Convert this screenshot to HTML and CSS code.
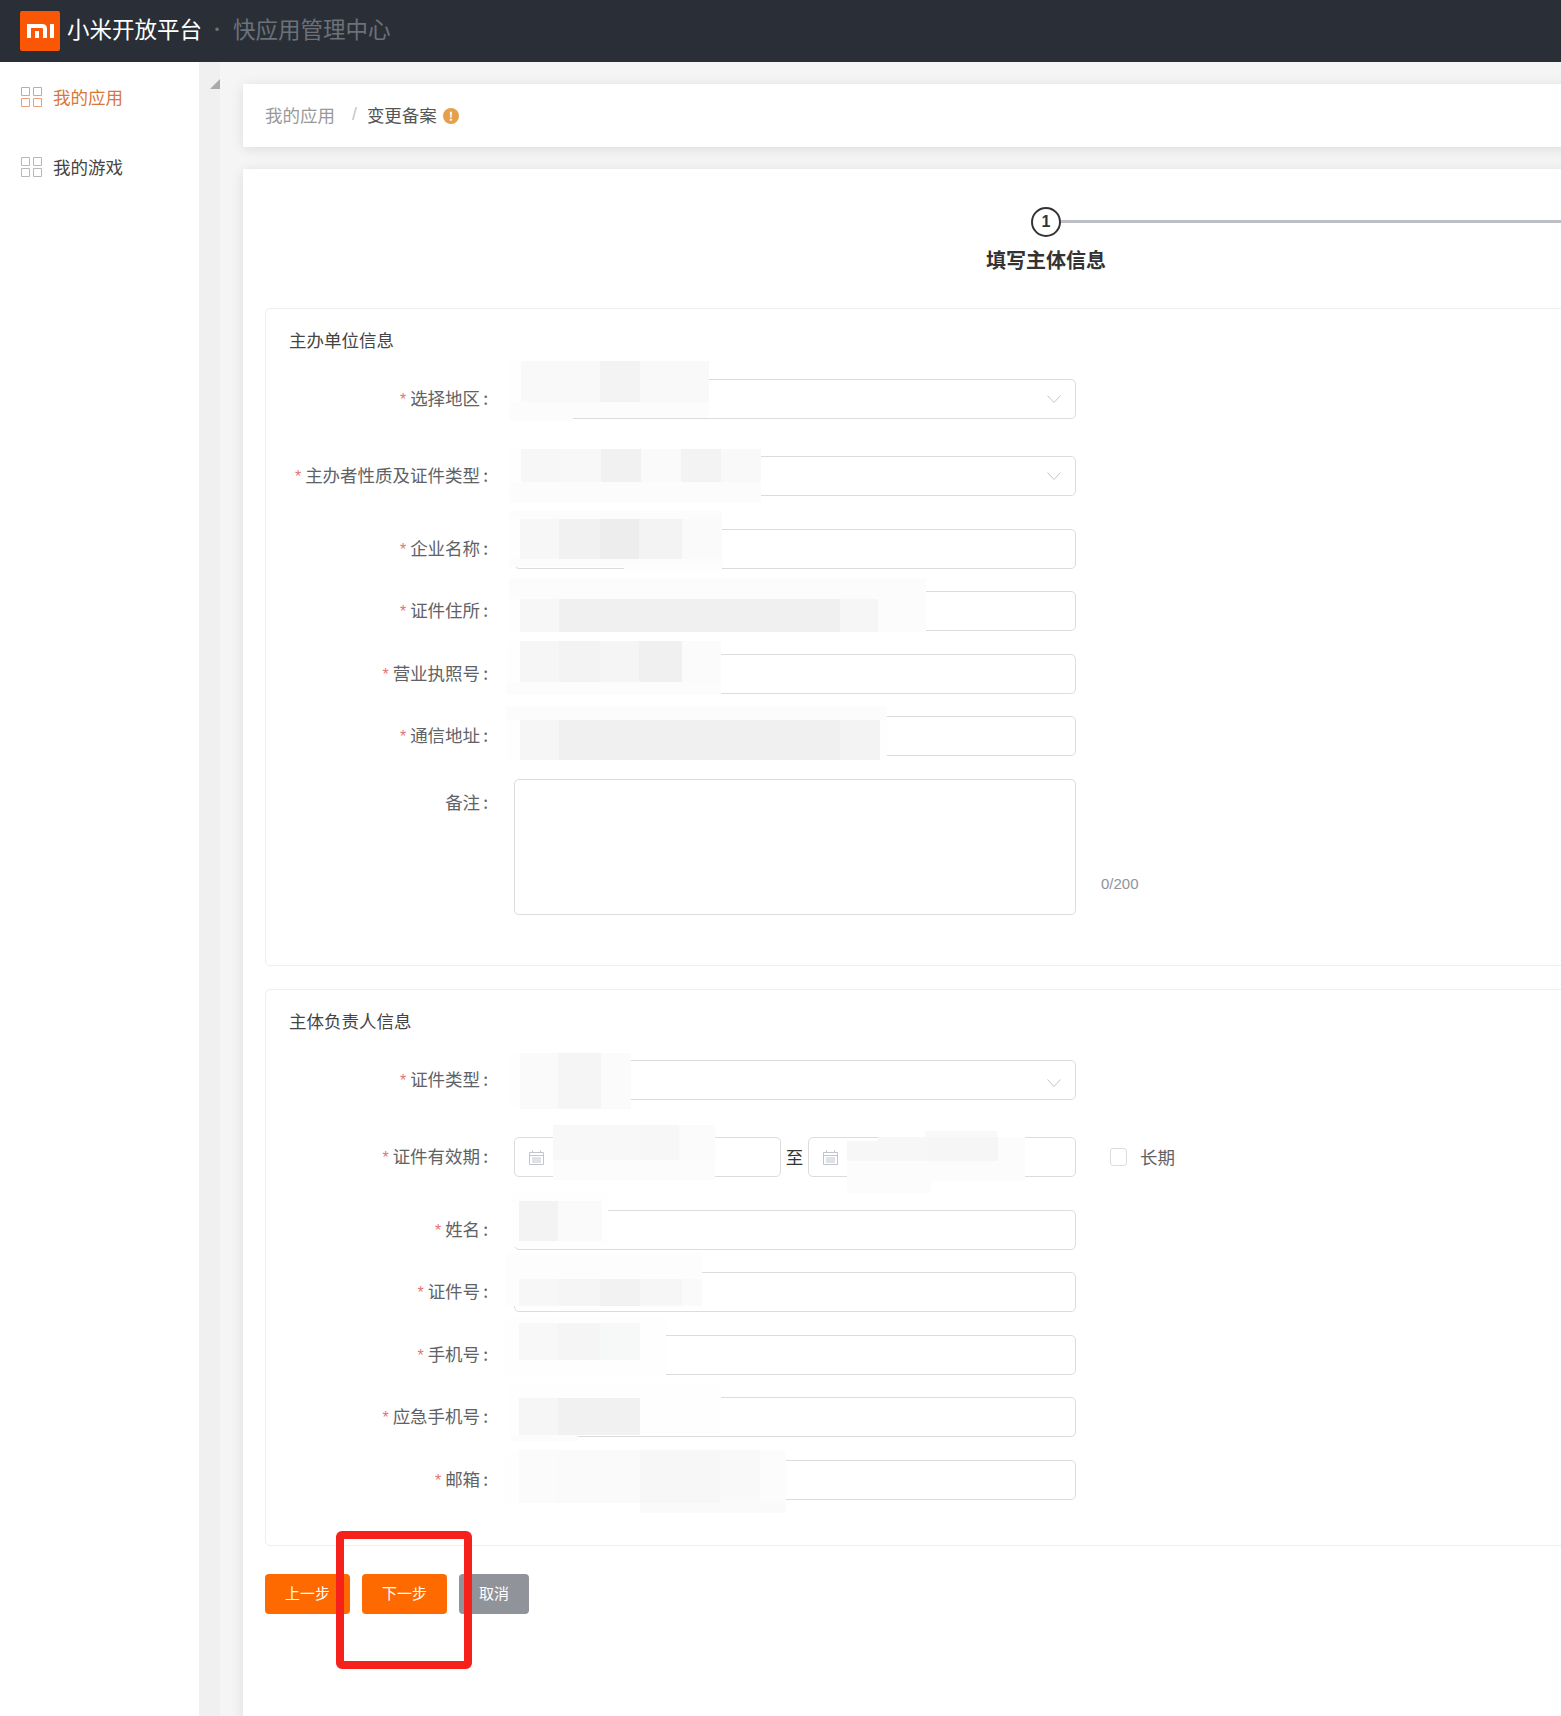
FILE: index.html
```html
<!DOCTYPE html>
<html lang="zh-CN">

<head>
  <meta charset="UTF-8">
  <meta name="viewport" content="width=device-width, initial-scale=1.0">
  <title>小米开放平台 · 快应用管理中心</title>
  <link rel="stylesheet" href="styles.css">
</head>

<body>
  <header class="topbar">
    <svg class="logo" viewBox="0 0 40 40">
      <rect width="40" height="40" rx="2" fill="#f95706" />
      <path fill="#fff" d="M7 13H22Q27 13 27 18V27H23V18Q23 17 22 17H11V27H7ZM15 20H19V27H15ZM30 13H34V27H30Z" />
    </svg>
    <span class="brand">小米开放平台</span>
    <span class="brand-dot">·</span>
    <span class="brand-sub">快应用管理中心</span>
  </header>

  <div class="app">
    <nav class="sidebar">
      <a class="nav-item nav-active">
        <svg class="nav-icon" viewBox="0 0 21 20">
          <path d="M.5.5h8v8h-8zM12.5.5h8v8h-8zM.5 11.5h8v8h-8zM12.5 11.5h8v8h-8z" />
        </svg>
        我的应用
      </a>
      <a class="nav-item">
        <svg class="nav-icon" viewBox="0 0 21 20">
          <path d="M.5.5h8v8h-8zM12.5.5h8v8h-8zM.5 11.5h8v8h-8zM12.5 11.5h8v8h-8z" />
        </svg>
        我的游戏
      </a>
    </nav>

    <div class="collapse-strip"><span class="collapse-mark"></span></div>

    <main class="content">
      <div class="crumbs">
        <span class="crumb-link">我的应用</span>
        <span class="crumb-sep">/</span>
        <span class="crumb-now">变更备案</span>
        <span class="crumb-warn">!</span>
      </div>

      <section class="card">
        <div class="stepper">
          <div class="step-track">
            <span class="step-num">1</span>
            <span class="step-line"></span>
          </div>
          <div class="step-title">填写主体信息</div>
        </div>

        <div class="panel panel-org">
          <h3 class="panel-title">主办单位信息</h3>

          <div class="row gap-l">
            <label class="label req">选择地区<span class="colon">:</span></label>
            <div class="field select">
              <svg class="chevron" viewBox="0 0 14 8"><path d="M.5.5 7 7.5 13.5.5" /></svg>
              <div class="patch p1"></div>
              <div class="patch p1b"></div>
            </div>
          </div>
          <div class="row gap-m">
            <label class="label req">主办者性质及证件类型<span class="colon">:</span></label>
            <div class="field select">
              <svg class="chevron" viewBox="0 0 14 8"><path d="M.5.5 7 7.5 13.5.5" /></svg>
              <div class="patch p2"></div>
            </div>
          </div>
          <div class="row">
            <label class="label req">企业名称<span class="colon">:</span></label>
            <div class="field">
              <input class="input" type="text">
              <div class="patch p3"></div>
              <div class="patch p3b"></div>
            </div>
          </div>
          <div class="row gap-t">
            <label class="label req">证件住所<span class="colon">:</span></label>
            <div class="field">
              <input class="input" type="text">
              <div class="patch p4"></div>
            </div>
          </div>
          <div class="row">
            <label class="label req">营业执照号<span class="colon">:</span></label>
            <div class="field">
              <input class="input" type="text">
              <div class="patch p5"></div>
            </div>
          </div>
          <div class="row gap-t">
            <label class="label req">通信地址<span class="colon">:</span></label>
            <div class="field">
              <input class="input" type="text">
              <div class="patch p6"></div>
            </div>
          </div>
          <div class="row row-area">
            <label class="label label-top">备注<span class="colon">:</span></label>
            <div class="field"><textarea class="input area"></textarea></div>
            <span class="counter">0/200</span>
          </div>
        </div>

        <div class="panel panel-owner">
          <h3 class="panel-title">主体负责人信息</h3>

          <div class="row gap-l">
            <label class="label req">证件类型<span class="colon">:</span></label>
            <div class="field select">
              <svg class="chevron chevron-low" viewBox="0 0 14 8"><path d="M.5.5 7 7.5 13.5.5" /></svg>
              <div class="patch p7"></div>
            </div>
          </div>
          <div class="row gap-m">
            <label class="label req">证件有效期<span class="colon">:</span></label>
            <div class="field date-range">
              <div class="date">
                <svg class="cal" viewBox="0 0 15 15">
                  <path d="M.5 2.5h14v12H.5zM.5 5.5h14M3.5.5v2M11.5.5v2M3 8h9M3 10h9M3 12h9" />
                </svg>
              </div>
              <span class="date-to">至</span>
              <div class="date">
                <svg class="cal" viewBox="0 0 15 15">
                  <path d="M.5 2.5h14v12H.5zM.5 5.5h14M3.5.5v2M11.5.5v2M3 8h9M3 10h9M3 12h9" />
                </svg>
              </div>
              <div class="patch p8"></div>
              <div class="patch p9"></div>
              <div class="patch p9b"></div>
              <div class="patch p9c"></div>
              <div class="patch p9d"></div>
            </div>
            <div class="long-term">
              <span class="checkbox"></span>
              <span class="long-text">长期</span>
            </div>
          </div>
          <div class="row">
            <label class="label req">姓名<span class="colon">:</span></label>
            <div class="field">
              <input class="input" type="text">
              <div class="patch p10"></div>
            </div>
          </div>
          <div class="row gap-t">
            <label class="label req">证件号<span class="colon">:</span></label>
            <div class="field">
              <input class="input" type="text">
              <div class="patch p11"></div>
            </div>
          </div>
          <div class="row">
            <label class="label req">手机号<span class="colon">:</span></label>
            <div class="field">
              <input class="input" type="text">
              <div class="patch p12"></div>
            </div>
          </div>
          <div class="row gap-t">
            <label class="label req">应急手机号<span class="colon">:</span></label>
            <div class="field">
              <input class="input" type="text">
              <div class="patch p13"></div>
              <div class="patch p13b"></div>
            </div>
          </div>
          <div class="row row-last">
            <label class="label req">邮箱<span class="colon">:</span></label>
            <div class="field">
              <input class="input" type="text">
              <div class="patch p14"></div>
              <div class="patch p14b"></div>
            </div>
          </div>
        </div>

        <div class="actions">
          <button class="btn btn-orange">上一步</button>
          <button class="btn btn-orange">下一步</button>
          <button class="btn btn-grey">取消</button>
          <div class="red-box"></div>
        </div>
      </section>
    </main>
  </div>
</body>

</html>
```

FILE: styles.css
```css
* {
  box-sizing: border-box;
  font-family: "Noto Sans CJK SC", "Liberation Sans", sans-serif;
}

html,
body {
  height: 100%;
  margin: 0;
  overflow: hidden;
}

body {
  display: flex;
  flex-direction: column;
  background: #f5f5f5;
}

/* top bar */
.topbar {
  display: flex;
  align-items: center;
  flex: none;
  height: 62px;
  padding-left: 20px;
  background: #2a2f37;
  font-size: 22.5px;
}

.logo {
  width: 40px;
  height: 40px;
  margin-right: 7px;
}

.brand,
.brand-dot,
.brand-sub {
  margin-bottom: 6px;
  line-height: 30px;
}

.brand {
  color: #fff;
}

.brand-dot {
  margin-right: 8px;
  margin-left: 7px;
  color: #6c7278;
  font-size: 16px;
}

.brand-sub {
  color: #6c7278;
}

/* left side */
.app {
  display: flex;
  flex: 1;
  min-height: 0;
}

.sidebar {
  flex: none;
  width: 199px;
  background: #fff;
}

.nav-item {
  display: flex;
  align-items: center;
  height: 70px;
  padding-left: 21px;
  color: #444;
  font-size: 17.5px;
  line-height: 66px;
}

.nav-icon {
  width: 21px;
  height: 20px;
  margin-right: 11px;
  fill: none;
  stroke: #b5b8bb;
}

.nav-active {
  color: #d8773c;
}

.nav-active .nav-icon {
  stroke: #e8a07a;
}

.collapse-strip {
  display: flex;
  justify-content: flex-end;
  flex: none;
  width: 21px;
  padding-top: 17px;
  background: #f0f0f0;
}

.collapse-mark {
  width: 0;
  height: 0;
  border-bottom: 10px solid #aaa;
  border-left: 10px solid transparent;
}

/* content */
.content {
  flex: none;
  width: 1500px;
  padding: 22px 0 0 23px;
}

.crumbs {
  display: flex;
  align-items: center;
  height: 63px;
  padding: 0 0 3px 22px;
  background: #fff;
  box-shadow: 0 2px 12px rgba(0, 0, 0, .1);
  font-size: 17.5px;
}

.crumb-link {
  color: #999;
}

.crumb-sep {
  margin: 0 10px 0 17px;
  color: #c0c4cc;
  font-family: "Liberation Sans", sans-serif;
}

.crumb-now {
  color: #555;
}

.crumb-warn {
  width: 16px;
  height: 16px;
  margin: 3px 0 0 6px;
  border-radius: 50%;
  background: #e5a04a;
  color: #fff;
  font-size: 12px;
  font-weight: 700;
  line-height: 16px;
  text-align: center;
}

.card {
  min-height: 1600px;
  margin-top: 22px;
  padding: 38px 0 0 22px;
  background: #fff;
  box-shadow: 0 2px 12px rgba(0, 0, 0, .1);
}

/* stepper */
.stepper {
  margin-bottom: 33px;
}

.step-track {
  display: flex;
  align-items: center;
  padding-left: 766px;
}

.step-num {
  flex: none;
  width: 30px;
  height: 30px;
  border: 2px solid #333;
  border-radius: 50%;
  color: #333;
  font-family: "Liberation Sans", sans-serif;
  font-size: 16px;
  font-weight: 700;
  line-height: 26px;
  text-align: center;
}

.step-line {
  flex: 1;
  height: 3px;
  margin-bottom: 2px;
  background: #bcbfc4;
}

.step-title {
  margin-top: 8px;
  padding-left: 721px;
  color: #333;
  font-size: 20px;
  font-weight: 700;
  line-height: 30px;
}

/* form panels */
.panel {
  padding-top: 16px;
  border: 1px solid #eee;
  border-radius: 5px;
}

.panel-org {
  margin-bottom: 23px;
  padding-bottom: 50px;
}

.panel-owner {
  padding-bottom: 45px;
}

.panel-title {
  margin: 0 0 24px 23px;
  color: #444;
  font-size: 17.5px;
  font-weight: 400;
  line-height: 30px;
}

.row {
  display: flex;
  height: 40px;
  margin-bottom: 22px;
}

.gap-l {
  margin-bottom: 37px;
}

.gap-m {
  margin-bottom: 33px;
}

.gap-t {
  margin-bottom: 23px;
}

.row-area {
  height: 136px;
  margin-bottom: 0;
}

.row-last {
  margin-bottom: 0;
}

.label {
  flex: none;
  width: 222px;
  height: 40px;
  margin-right: 26px;
  color: #606266;
  font-size: 17.5px;
  line-height: 37px;
  text-align: right;
}

.colon {
  margin-left: 3px;
}

.req::before {
  content: "*";
  margin-right: 4px;
  color: #e57373;
  font-family: "Liberation Sans", sans-serif;
  font-size: 16px;
  line-height: 1;
}

.label-top {
  line-height: 46px;
}

.field {
  position: relative;
  flex: none;
  width: 562px;
  height: 40px;
}

.input {
  display: block;
  width: 100%;
  height: 100%;
  border: 1px solid #dcdcdc;
  border-radius: 5px;
  outline: none;
  background: #fff;
}

.row-area .field {
  height: 136px;
}

.area {
  resize: none;
}

.select {
  display: flex;
  align-items: center;
  justify-content: flex-end;
  padding-right: 14px;
  border: 1px solid #dcdcdc;
  border-radius: 5px;
}

.chevron {
  width: 14px;
  height: 8px;
  fill: none;
  stroke: #c0c4cc;
}

.chevron-low {
  margin-top: 6px;
}

.date-range {
  display: flex;
  align-items: center;
  justify-content: space-between;
}

.date {
  display: flex;
  align-items: center;
  width: 267px;
  height: 40px;
  padding-left: 14px;
  border: 1px solid #dcdcdc;
  border-radius: 5px;
}

.date-to + .date {
  width: 268px;
}

.date-to {
  padding-bottom: 2px;
  color: #333;
  font-size: 17.5px;
}

.cal {
  width: 15px;
  height: 15px;
  fill: none;
  stroke: #c0c4cc;
}

.counter {
  align-self: flex-end;
  margin: 0 0 21px 25px;
  color: #909399;
  font-family: "Liberation Sans", sans-serif;
  font-size: 15px;
  line-height: 20px;
}

.long-term {
  display: flex;
  align-items: center;
  margin-left: 34px;
  color: #606266;
  font-size: 17.5px;
}

.long-text {
  padding-bottom: 2px;
}

.checkbox {
  width: 17px;
  height: 18px;
  margin-right: 13px;
  border: 1px solid #dcdcdc;
  border-radius: 3px;
}

/* mosaics that hide the filled in values */
.patch {
  position: absolute;
  background: #fcfcfc;
}

.p1 {
  top: -19px;
  left: -5px;
  width: 199px;
  height: 57px;
  background: linear-gradient(90deg, #fefefe 0 11px, #f9f9f9 11px 90px, #f3f3f3 90px 130px, #f9f9f9 130px) 0 0/100% 41px no-repeat, #fcfcfc;
}

.p1b {
  top: 37px;
  left: -5px;
  width: 63px;
  height: 4px;
}

.p2 {
  top: -8px;
  left: -5px;
  width: 251px;
  height: 54px;
  background: linear-gradient(90deg, #fefefe 0 11px, #f7f7f7 11px 50px, #f8f8f8 50px 91px, #f1f1f1 91px 131px, #fafafa 131px 171px, #f3f3f3 171px 211px, #f9f9f9 211px) 0 0/100% 33px no-repeat, #fcfcfc;
}

.p3 {
  top: -18px;
  left: -5px;
  width: 213px;
  height: 56px;
  background: linear-gradient(90deg, #fefefe 0 11px, #f7f7f7 11px 50px, #f1f1f1 50px 91px, #ededed 91px 130px, #f3f3f3 130px 173px, #fafafa 173px) 0 8px/100% 40px no-repeat, #fcfcfc;
}

.p3b {
  top: 37px;
  left: 110px;
  width: 98px;
  height: 6px;
  background: #fdfdfd;
}

.p4 {
  top: -13px;
  left: -5px;
  width: 417px;
  height: 54px;
  background: linear-gradient(90deg, #fefefe 0 11px, #f7f7f7 11px 50px, #f0f0f0 50px 331px, #f6f6f6 331px 369px, #fcfcfc 369px) 0 21px/100% 33px no-repeat, #fcfcfc;
}

.p5 {
  top: -13px;
  left: -8px;
  width: 215px;
  height: 54px;
  background: linear-gradient(90deg, #fefefe 0 14px, #f6f6f6 14px 53px, #f3f3f3 53px 94px, #f5f5f5 94px 133px, #f0f0f0 133px 176px, #fbfbfb 176px) 0 0/100% 41px no-repeat, #fcfcfc;
}

.p6 {
  top: -10px;
  left: -8px;
  width: 381px;
  height: 54px;
  background: linear-gradient(90deg, #fefefe 0 14px, #f6f6f6 14px 53px, #f0f0f0 53px 334px, #f3f3f3 334px 374px, #fefefe 374px) 0 14px/100% 40px no-repeat, #fcfcfc;
}

.p7 {
  top: -8px;
  left: -5px;
  width: 121px;
  height: 56px;
  background: linear-gradient(90deg, #fefefe 0 10px, #fafafa 10px 48px, #f5f5f5 48px 91px, #fbfbfb 91px);
}

.p8 {
  top: -12px;
  left: 39px;
  width: 162px;
  height: 55px;
  background: linear-gradient(90deg, #f8f8f8 0 86px, #f6f7f6 86px 126px, #fbfbfb 126px) 0 0/100% 35px no-repeat, #fcfcfc;
}

.p9 {
  top: 4px;
  left: 333px;
  width: 31px;
  height: 52px;
  background: linear-gradient(#f7f7f7 0 20px, #fbfcfb 20px);
}

.p9b {
  top: 0;
  left: 364px;
  width: 147px;
  height: 44px;
  background: linear-gradient(90deg, #f7f7f7 0 50px, #f6f6f6 50px 120px, #fcfcfc 120px) 0 0/100% 24px no-repeat, #fbfcfb;
}

.p9c {
  top: 44px;
  left: 364px;
  width: 53px;
  height: 12px;
  background: #fbfcfb;
}

.p9d {
  top: -6px;
  left: 411px;
  width: 72px;
  height: 6px;
  background: #f9f9f9;
}

.p10 {
  top: -17px;
  left: -2px;
  width: 96px;
  height: 54px;
  background: linear-gradient(90deg, #fefefe 0 7px, #f3f3f3 7px 46px, #fafafa 46px 90px, #fefefe 90px) 0 8px/100% 40px no-repeat, #fefefe;
}

.p11 {
  top: -19px;
  left: -8px;
  width: 196px;
  height: 53px;
  background: linear-gradient(90deg, #fdfdfd 0 13px, #f7f7f7 13px 52px, #f5f5f5 52px 94px, #f2f2f2 94px 134px, #f6f6f6 134px 176px, #fafafa 176px) 0 26px/100% 27px no-repeat, #fdfdfd;
}

.p12 {
  top: -17px;
  left: -9px;
  width: 161px;
  height: 57px;
  background: linear-gradient(90deg, #fefefe 0 14px, #f8f8f8 14px 53px, #f5f5f5 53px 95px, #f7f8f8 95px 135px, #fefefe 135px) 0 5px/100% 37px no-repeat, #fefefe;
}

.p13 {
  top: -14px;
  left: -4px;
  width: 211px;
  height: 52px;
  background: linear-gradient(90deg, #fefefe 0 9px, #f6f6f6 9px 48px, #f1f1f1 48px 130px, #fefefe 130px) 0 15px/100% 37px no-repeat, #fefefe;
}

.p13b {
  top: 38px;
  left: -4px;
  width: 68px;
  height: 6px;
  background: #fcfcfc;
}

.p14 {
  top: -10px;
  left: -9px;
  width: 281px;
  height: 53px;
  background: linear-gradient(90deg, #fefefe 0 14px, #fbfbfb 14px 53px, #fafafa 53px 135px, #f7f7f7 135px 215px, #f9f9f9 215px 255px, #fcfcfc 255px);
}

.p14b {
  top: 43px;
  left: 126px;
  width: 146px;
  height: 10px;
  background: #fafafa;
}

/* buttons */
.actions {
  position: relative;
  display: flex;
  gap: 12px;
  margin-top: 28px;
}

.btn {
  width: 85px;
  height: 40px;
  padding: 0 0 4px;
  border: 0;
  border-radius: 4px;
  color: #fff;
  font-size: 15px;
}

.btn-orange {
  background: #ff6a00;
}

.btn-grey {
  width: 70px;
  background: #909399;
}

.red-box {
  position: absolute;
  top: -43px;
  left: 71px;
  width: 136px;
  height: 138px;
  border: 8px solid #f5211a;
  border-radius: 6px;
}
```
